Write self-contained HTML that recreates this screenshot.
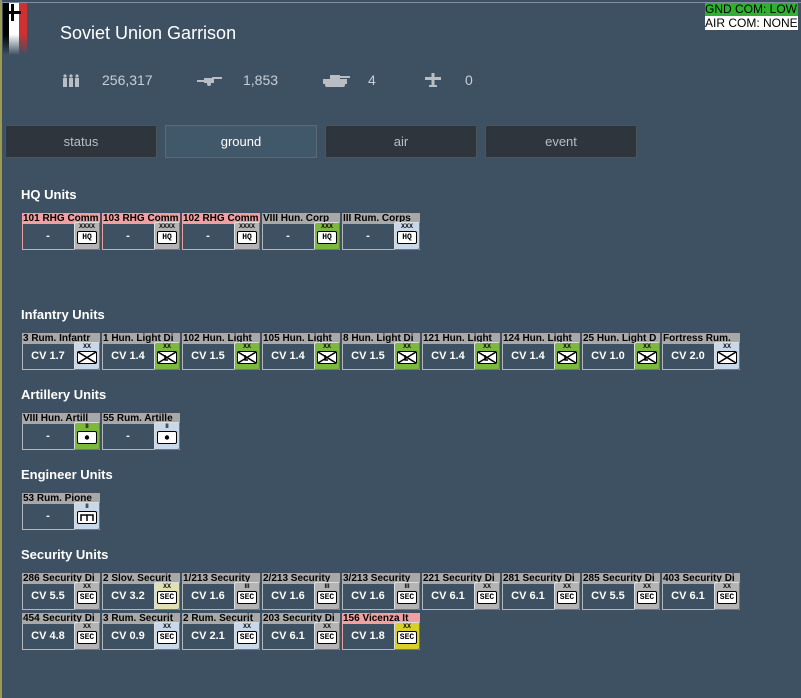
<!DOCTYPE html><html><head><meta charset="utf-8"><style>
body{margin:0;width:801px;height:698px;overflow:hidden;background:#3e5162;font-family:"Liberation Sans",sans-serif;position:relative}
.bl{position:absolute;left:0;top:0;width:2px;height:698px;background:#9a9a50}
.tl{position:absolute;left:0;top:2px;width:801px;height:1px;background:#8090a0}
.t{position:absolute;color:#fff}
.st{position:absolute;top:72px;color:#c8ced4;font-size:14px}
.tab{position:absolute;top:125px;width:150px;height:31px;background:#2e353c;border:1px solid #4a5560;color:#b8bec4;font-size:13px;text-align:center;line-height:31px}
.tab.a{background:#40586a;color:#fff;border-color:#5a6a78}
.sec{position:absolute;left:21px;color:#fff;font-size:13px;font-weight:bold}
.c{position:absolute;width:78px;height:38px}
.h{height:11px;background:#a8a8a8;color:#000;font:bold 10px "Liberation Sans",sans-serif;line-height:11px;white-space:nowrap;overflow:hidden;padding-left:1px}
.h.p{background:#f0a0a0}
.b{height:25px;border:1px solid #b4b8bc;border-top:none;color:#fff;font:bold 11px "Liberation Sans",sans-serif;line-height:25px;text-align:left;position:relative;width:76px}
.b.p{border-color:#e8a0a0}
.b span{display:inline-block;width:50px;text-align:center}
.i{position:absolute;left:52px;top:9px;width:26px;height:28px;background:#b4b4b4;border-radius:2px;box-shadow:inset -1px -1px 0 #777,inset 1px 1px 0 #ddd;text-align:center}
.i.g{background:#7cb83c}.i.l{background:#c8d8ea}.i.y{background:#e0e0b4}.i.Y{background:#d8d028}
.s{font:bold 6px "Liberation Sans",sans-serif;color:#000;height:7px;line-height:8px;margin-top:1px}
.x{margin:1px auto 0;width:18px;height:11px;border:1.5px solid #000;border-radius:2px;background:#fff;font:bold 8px "Liberation Mono",monospace;line-height:11px;color:#000}
.x svg{display:block}
</style></head><body>
<div class="bl"></div><div class="tl"></div>
<div style="position:absolute;left:3px;top:3px;width:24px;height:52px;background:linear-gradient(90deg,#000 0 6px,#fff 6px 16px,#d03030 16px 24px);-webkit-mask:linear-gradient(#000 60%,transparent)"></div>
<div style="position:absolute;left:4px;top:11px;width:17px;height:3px;background:#000"></div><div style="position:absolute;left:11px;top:4px;width:3px;height:17px;background:#000"></div>
<div class="t" style="left:60px;top:23px;font-size:18px">Soviet Union Garrison</div>
<div style="position:absolute;left:705px;top:3px;width:93px;height:13px;background:#30b030;font:12px 'Liberation Sans',sans-serif;line-height:13px;color:#000">GND COM: LOW</div>
<div style="position:absolute;left:705px;top:16px;width:93px;height:14px;background:#fff;font:12px 'Liberation Sans',sans-serif;line-height:14px;color:#000">AIR COM: NONE</div>
<svg style="position:absolute;left:62px;top:74px" width="18" height="14"><g fill="#b8bec4"><circle cx="3" cy="2" r="1.6"/><circle cx="9" cy="2" r="1.6"/><circle cx="15" cy="2" r="1.6"/><rect x="1" y="4" width="4" height="9"/><rect x="7" y="4" width="4" height="9"/><rect x="13" y="4" width="4" height="9"/></g></svg>
<div class="st" style="left:102px">256,317</div>
<svg style="position:absolute;left:197px;top:76px" width="26" height="10"><g fill="#b8bec4"><rect x="0" y="4" width="8" height="2"/><rect x="7" y="2" width="10" height="5"/><rect x="15" y="1" width="10" height="2"/><circle cx="12" cy="8" r="2"/></g></svg>
<div class="st" style="left:243px">1,853</div>
<svg style="position:absolute;left:322px;top:74px" width="28" height="14"><g fill="#b8bec4"><rect x="8" y="1" width="10" height="5"/><rect x="16" y="2" width="12" height="2"/><rect x="1" y="5" width="24" height="5"/><rect x="3" y="9" width="20" height="4" rx="2"/></g></svg>
<div class="st" style="left:368px">4</div>
<svg style="position:absolute;left:425px;top:72px" width="16" height="16"><g fill="#b8bec4"><rect x="0" y="5" width="16" height="3"/><rect x="6.5" y="1" width="3" height="14"/><rect x="4" y="13" width="8" height="2"/></g></svg>
<div class="st" style="left:465px">0</div>
<div class="tab" style="left:5px">status</div><div class="tab a" style="left:165px">ground</div><div class="tab" style="left:325px">air</div><div class="tab" style="left:485px">event</div>
<div class="sec" style="top:187px">HQ Units</div>
<div class="sec" style="top:307px">Infantry Units</div>
<div class="sec" style="top:387px">Artillery Units</div>
<div class="sec" style="top:467px">Engineer Units</div>
<div class="sec" style="top:547px">Security Units</div>

<div class="c" style="left:22px;top:213px"><div class="h p">101 RHG Comm</div><div class="b p"><span>-</span></div><div class="i"><div class="s">XXXX</div><div class="x">HQ</div></div></div>
<div class="c" style="left:102px;top:213px"><div class="h p">103 RHG Comm</div><div class="b p"><span>-</span></div><div class="i"><div class="s">XXXX</div><div class="x">HQ</div></div></div>
<div class="c" style="left:182px;top:213px"><div class="h p">102 RHG Comm</div><div class="b p"><span>-</span></div><div class="i"><div class="s">XXXX</div><div class="x">HQ</div></div></div>
<div class="c" style="left:262px;top:213px"><div class="h">VIII Hun. Corp</div><div class="b"><span>-</span></div><div class="i g"><div class="s">XXX</div><div class="x">HQ</div></div></div>
<div class="c" style="left:342px;top:213px"><div class="h">III Rum. Corps</div><div class="b"><span>-</span></div><div class="i l"><div class="s">XXX</div><div class="x">HQ</div></div></div>

<div class="c" style="left:22px;top:333px"><div class="h">3 Rum. Infantr</div><div class="b"><span>CV 1.7</span></div><div class="i l"><div class="s">XX</div><div class="x"><svg width="18" height="11"><path d="M0 0L18 11M18 0L0 11" stroke="#000" stroke-width="1.5"/></svg></div></div></div>
<div class="c" style="left:102px;top:333px"><div class="h">1 Hun. Light Di</div><div class="b"><span>CV 1.4</span></div><div class="i g"><div class="s">XX</div><div class="x"><svg width="18" height="11"><path d="M0 0L18 11M18 0L0 11M7 3V8H10" stroke="#000" stroke-width="1.5" fill="none"/></svg></div></div></div>
<div class="c" style="left:182px;top:333px"><div class="h">102 Hun. Light</div><div class="b"><span>CV 1.5</span></div><div class="i g"><div class="s">XX</div><div class="x"><svg width="18" height="11"><path d="M0 0L18 11M18 0L0 11M7 3V8H10" stroke="#000" stroke-width="1.5" fill="none"/></svg></div></div></div>
<div class="c" style="left:262px;top:333px"><div class="h">105 Hun. Light</div><div class="b"><span>CV 1.4</span></div><div class="i g"><div class="s">XX</div><div class="x"><svg width="18" height="11"><path d="M0 0L18 11M18 0L0 11M7 3V8H10" stroke="#000" stroke-width="1.5" fill="none"/></svg></div></div></div>
<div class="c" style="left:342px;top:333px"><div class="h">8 Hun. Light Di</div><div class="b"><span>CV 1.5</span></div><div class="i g"><div class="s">XX</div><div class="x"><svg width="18" height="11"><path d="M0 0L18 11M18 0L0 11M7 3V8H10" stroke="#000" stroke-width="1.5" fill="none"/></svg></div></div></div>
<div class="c" style="left:422px;top:333px"><div class="h">121 Hun. Light</div><div class="b"><span>CV 1.4</span></div><div class="i g"><div class="s">XX</div><div class="x"><svg width="18" height="11"><path d="M0 0L18 11M18 0L0 11M7 3V8H10" stroke="#000" stroke-width="1.5" fill="none"/></svg></div></div></div>
<div class="c" style="left:502px;top:333px"><div class="h">124 Hun. Light</div><div class="b"><span>CV 1.4</span></div><div class="i g"><div class="s">XX</div><div class="x"><svg width="18" height="11"><path d="M0 0L18 11M18 0L0 11M7 3V8H10" stroke="#000" stroke-width="1.5" fill="none"/></svg></div></div></div>
<div class="c" style="left:582px;top:333px"><div class="h">25 Hun. Light D</div><div class="b"><span>CV 1.0</span></div><div class="i g"><div class="s">XX</div><div class="x"><svg width="18" height="11"><path d="M0 0L18 11M18 0L0 11M7 3V8H10" stroke="#000" stroke-width="1.5" fill="none"/></svg></div></div></div>
<div class="c" style="left:662px;top:333px"><div class="h">Fortress Rum.</div><div class="b"><span>CV 2.0</span></div><div class="i l"><div class="s">XX</div><div class="x"><svg width="18" height="11"><path d="M0 0L18 11M18 0L0 11" stroke="#000" stroke-width="1.5"/></svg></div></div></div>

<div class="c" style="left:22px;top:413px"><div class="h">VIII Hun. Artill</div><div class="b"><span>-</span></div><div class="i g"><div class="s">II</div><div class="x"><svg width="18" height="11"><circle cx="9" cy="5.5" r="2.2" fill="#000"/></svg></div></div></div>
<div class="c" style="left:102px;top:413px"><div class="h">55 Rum. Artille</div><div class="b"><span>-</span></div><div class="i l"><div class="s">II</div><div class="x"><svg width="18" height="11"><circle cx="9" cy="5.5" r="2.2" fill="#000"/></svg></div></div></div>

<div class="c" style="left:22px;top:493px"><div class="h">53 Rum. Pione</div><div class="b"><span>-</span></div><div class="i l"><div class="s">II</div><div class="x"><svg width="18" height="11"><path d="M3 9V3H15V9M9 3V9" stroke="#000" stroke-width="1.5" fill="none"/></svg></div></div></div>

<div class="c" style="left:22px;top:573px"><div class="h">286 Security Di</div><div class="b"><span>CV 5.5</span></div><div class="i"><div class="s">XX</div><div class="x">SEC</div></div></div>
<div class="c" style="left:102px;top:573px"><div class="h">2 Slov. Securit</div><div class="b"><span>CV 3.2</span></div><div class="i y"><div class="s">XX</div><div class="x">SEC</div></div></div>
<div class="c" style="left:182px;top:573px"><div class="h">1/213 Security</div><div class="b"><span>CV 1.6</span></div><div class="i"><div class="s">III</div><div class="x">SEC</div></div></div>
<div class="c" style="left:262px;top:573px"><div class="h">2/213 Security</div><div class="b"><span>CV 1.6</span></div><div class="i"><div class="s">III</div><div class="x">SEC</div></div></div>
<div class="c" style="left:342px;top:573px"><div class="h">3/213 Security</div><div class="b"><span>CV 1.6</span></div><div class="i"><div class="s">III</div><div class="x">SEC</div></div></div>
<div class="c" style="left:422px;top:573px"><div class="h">221 Security Di</div><div class="b"><span>CV 6.1</span></div><div class="i"><div class="s">XX</div><div class="x">SEC</div></div></div>
<div class="c" style="left:502px;top:573px"><div class="h">281 Security Di</div><div class="b"><span>CV 6.1</span></div><div class="i"><div class="s">XX</div><div class="x">SEC</div></div></div>
<div class="c" style="left:582px;top:573px"><div class="h">285 Security Di</div><div class="b"><span>CV 5.5</span></div><div class="i"><div class="s">XX</div><div class="x">SEC</div></div></div>
<div class="c" style="left:662px;top:573px"><div class="h">403 Security Di</div><div class="b"><span>CV 6.1</span></div><div class="i"><div class="s">XX</div><div class="x">SEC</div></div></div>

<div class="c" style="left:22px;top:613px"><div class="h">454 Security Di</div><div class="b"><span>CV 4.8</span></div><div class="i"><div class="s">XX</div><div class="x">SEC</div></div></div>
<div class="c" style="left:102px;top:613px"><div class="h">3 Rum. Securit</div><div class="b"><span>CV 0.9</span></div><div class="i l"><div class="s">XX</div><div class="x">SEC</div></div></div>
<div class="c" style="left:182px;top:613px"><div class="h">2 Rum. Securit</div><div class="b"><span>CV 2.1</span></div><div class="i l"><div class="s">XX</div><div class="x">SEC</div></div></div>
<div class="c" style="left:262px;top:613px"><div class="h">203 Security Di</div><div class="b"><span>CV 6.1</span></div><div class="i"><div class="s">XX</div><div class="x">SEC</div></div></div>
<div class="c" style="left:342px;top:613px"><div class="h p">156 Vicenza It</div><div class="b p"><span>CV 1.8</span></div><div class="i Y"><div class="s">XX</div><div class="x">SEC</div></div></div>
</body></html>
